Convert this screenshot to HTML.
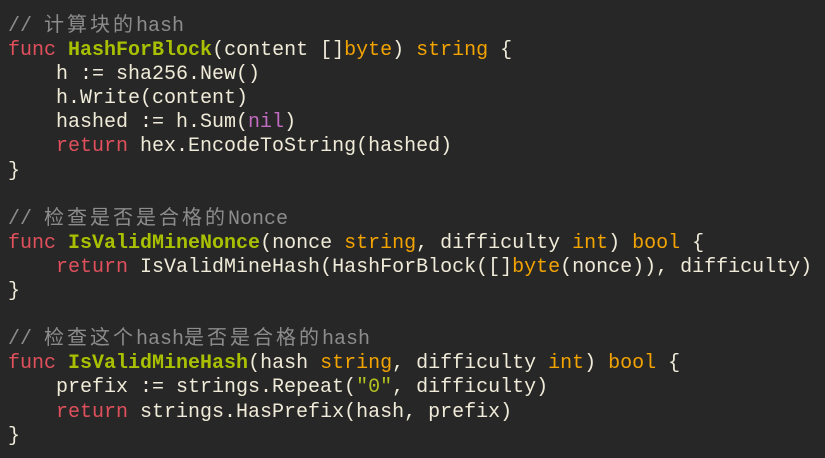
<!DOCTYPE html>
<html><head><meta charset="utf-8"><style>
html,body{margin:0;padding:0;background:#272727;width:825px;height:458px;overflow:hidden}
pre{margin:0;padding:15px 0 0 8px;font-family:"Liberation Mono","Noto Sans CJK SC",monospace;font-size:20px;line-height:24.1px;color:#f0ebd8}
.c{color:#8c8c8c}.cj{letter-spacing:3px}
.k{color:#e0505c}.f{color:#a8c000;font-weight:bold}.t{color:#f2a300}.n{color:#c06cc0}.s{color:#b0c020}
</style></head><body><pre><span class="c">// <span class="cj">计算块的</span>hash</span>
<span class="k">func</span> <span class="f">HashForBlock</span>(content []<span class="t">byte</span>) <span class="t">string</span> {
    h := sha256.New()
    h.Write(content)
    hashed := h.Sum(<span class="n">nil</span>)
    <span class="k">return</span> hex.EncodeToString(hashed)
}

<span class="c">// <span class="cj">检查是否是合格的</span>Nonce</span>
<span class="k">func</span> <span class="f">IsValidMineNonce</span>(nonce <span class="t">string</span>, difficulty <span class="t">int</span>) <span class="t">bool</span> {
    <span class="k">return</span> IsValidMineHash(HashForBlock([]<span class="t">byte</span>(nonce)), difficulty)
}

<span class="c">// <span class="cj">检查这个</span>hash<span class="cj">是否是合格的</span>hash</span>
<span class="k">func</span> <span class="f">IsValidMineHash</span>(hash <span class="t">string</span>, difficulty <span class="t">int</span>) <span class="t">bool</span> {
    prefix := strings.Repeat(<span class="s">"0"</span>, difficulty)
    <span class="k">return</span> strings.HasPrefix(hash, prefix)
}</pre></body></html>
